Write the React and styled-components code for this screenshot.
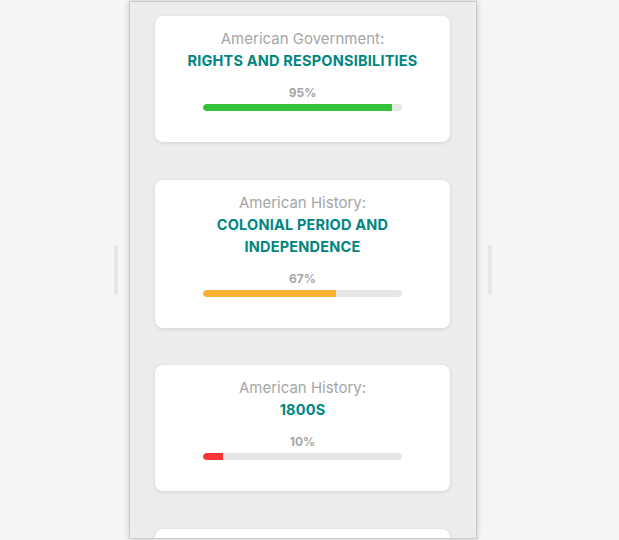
// Core
import React from 'react';

// Instruments
import styled, { createGlobalStyle } from 'styled-components';

const GlobalStyle = createGlobalStyle`
  html, body {
    margin: 0;
    padding: 0;
    background: #f5f5f5;
    font-family: Inter, "Noto Sans", sans-serif;
    -webkit-font-smoothing: antialiased;
  }
`;

const Stage = styled.div`
  display: flex;
  align-items: center;
  gap: 11px;
  height: 540px;
  padding-left: 114px;
  box-sizing: border-box;
`;

const Handle = styled.div`
  width: 4px;
  height: 50px;
  border-radius: 2px;
  background: #e6e6e6;
`;

const Phone = styled.div`
  align-self: flex-start;
  margin-top: 1px;
  width: 348px;
  height: 538px;
  box-sizing: border-box;
  border: 1px solid #c9c9c9;
  background: #ededee;
  box-shadow: 0 0 6px rgba(0, 0, 0, 0.18);
  overflow: hidden;
`;

const List = styled.div`
  display: flex;
  flex-direction: column;
  gap: 37.5px;
  padding: 14px 26px 0 25px;
`;

const Card = styled.div`
  background: #fff;
  border-radius: 8px;
  box-shadow: 0 1px 4px rgba(0, 0, 0, 0.12);
  padding: 13px 0 31px;
  min-height: ${({ $stub }) => ($stub ? '80px' : 'auto')};
  display: flex;
  flex-direction: column;
  align-items: center;
  text-align: center;
`;

const Subject = styled.div`
  font-size: 15px;
  line-height: 20px;
  color: #a5a5a5;
  margin-bottom: 1px;
`;

const Topic = styled.div`
  font-size: 14.5px;
  line-height: 22px;
  font-weight: 700;
  letter-spacing: 0.2px;
  color: #00867f;
  text-transform: uppercase;
  max-width: 240px;
`;

const Percent = styled.div`
  margin-top: 13px;
  font-size: 12px;
  line-height: 16px;
  font-weight: 700;
  color: #a6a6a6;
`;

const Track = styled.div`
  margin-top: 3px;
  width: 199px;
  height: 7px;
  border-radius: 4px;
  background: #e6e6e6;
  overflow: hidden;
`;

const Fill = styled.div`
  height: 100%;
  border-radius: 4px 0 0 4px;
  background: ${({ color }) => color};
`;

const colorFor = (value) => {
  if (value >= 80) return '#33c23a';
  if (value >= 40) return '#fbb233';
  return '#fb3535';
};

const courses = [
  { subject: 'American Government:', topic: 'Rights and Responsibilities', value: 95 },
  { subject: 'American History:', topic: 'Colonial Period and Independence', value: 67 },
  { subject: 'American History:', topic: '1800s', value: 10 },
];

const ProgressCard = ({ subject, topic, value }) => (
  <Card>
    <Subject>{subject}</Subject>
    <Topic>{topic}</Topic>
    <Percent>{value}%</Percent>
    <Track>
      <Fill color={colorFor(value)} style={{ width: `${value}%` }} />
    </Track>
  </Card>
);

export default function App() {
  return (
    <>
      <GlobalStyle />
      <Stage>
        <Handle />
        <Phone>
          <List>
            {courses.map((c) => <ProgressCard key={c.topic} {...c} />)}
            {/* next card, scrolled below the fold */}
            <Card $stub />
          </List>
        </Phone>
        <Handle />
      </Stage>
    </>
  );
}
